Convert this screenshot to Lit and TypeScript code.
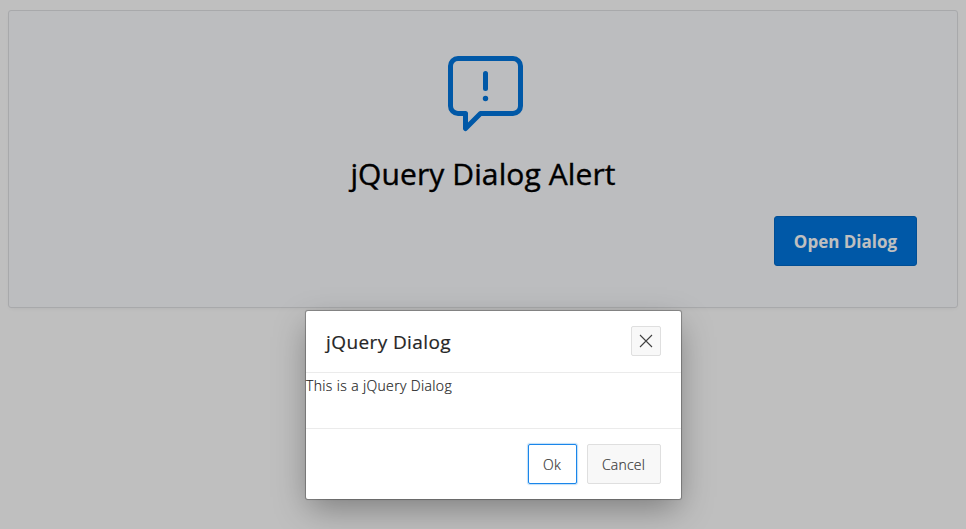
import { LitElement, html, css, svg } from 'lit'
import { customElement, property } from 'lit/decorators.js'

const closeIcon = svg`<path d="M1 1 13 13M13 1 1 13" fill="none" stroke="#404040" stroke-width="1.1" />`

@customElement('alert-region')
export class AlertRegion extends LitElement {
  @property({ type: String }) heading = ''

  static styles = css`
    :host {
      display: flex;
      flex-direction: column;
      align-items: center;
      box-sizing: border-box;
      height: 298px;
      padding: 45px 40px 0;
      background: #fbfcff;
      border: 1px solid #e1e2e5;
      border-radius: 3px;
      box-shadow: 0 2px 4px -2px rgba(0, 0, 0, 0.08);
    }
    .icon {
      display: block;
      width: 76px;
      height: 76px;
      margin-left: 4px;
    }
    .heading {
      margin: 18px 0 0;
      font-size: 30px;
      font-weight: 500;
      line-height: 48px;
      letter-spacing: 0.1px;
      -webkit-text-stroke: 0.4px #000;
      white-space: nowrap;
      color: #000;
    }
    .open {
      align-self: flex-end;
      box-sizing: border-box;
      width: 143px;
      height: 50px;
      margin-top: 18px;
      padding: 0;
      background: #0076df;
      border: 1px solid #0069c7;
      border-radius: 3px;
      font: inherit;
      font-size: 17px;
      font-weight: 700;
      letter-spacing: 0;
      color: #fff;
      white-space: nowrap;
      cursor: pointer;
    }
  `

  render() {
    return html`
      <svg class="icon" viewBox="-0.5 0 76 76">
        <path
          d="M10.5 2.5h55a7.5 7.5 0 0 1 7.5 7.5v40a7.5 7.5 0 0 1-7.5 7.5H33L18 72.5v-15h-7.5A7.5 7.5 0 0 1 3 50V10a7.5 7.5 0 0 1 7.5-7.5z"
          fill="none" stroke="#0076df" stroke-width="5" stroke-linejoin="round" />
        <path d="M38 17.5v15" stroke="#0076df" stroke-width="5" stroke-linecap="round" />
        <circle cx="38" cy="42.5" r="2.7" fill="#0076df" />
      </svg>
      <h1 class="heading">${this.heading}</h1>
      <button class="open">Open Dialog</button>
    `
  }
}

@customElement('alert-dialog')
export class AlertDialog extends LitElement {
  @property({ type: String }) heading = ''
  @property({ type: String }) message = ''

  static styles = css`
    :host {
      display: flex;
      flex-direction: column;
      box-sizing: border-box;
      width: 377px;
      height: 190px;
      background: #fff;
      border: 1px solid rgba(0, 0, 0, 0.15);
      background-clip: padding-box;
      border-radius: 3px;
      box-shadow: 0 12px 32px -4px rgba(0, 0, 0, 0.35), 0 0 1px rgba(0, 0, 0, 0.15);
      color: #262626;
    }
    .titlebar {
      display: flex;
      align-items: flex-start;
      justify-content: space-between;
      box-sizing: border-box;
      height: 62px;
      padding: 15px 20px 0;
      border-bottom: 1px solid #ebebeb;
    }
    .title {
      font-size: 19px;
      font-weight: 500;
      line-height: 32px;
      letter-spacing: 0.4px;
      -webkit-text-stroke: 0.2px #262626;
      white-space: nowrap;
    }
    .close {
      display: flex;
      align-items: center;
      justify-content: center;
      box-sizing: border-box;
      width: 30px;
      height: 30px;
      padding: 0 1px 0 0;
      background: #f8f8f8;
      border: 1px solid #dfdfdf;
      border-radius: 2px;
    }
    .close svg {
      width: 14px;
      height: 14px;
    }
    .content {
      flex: 1;
      padding-top: 3px;
      font-size: 14px;
      font-weight: 300;
      line-height: 20px;
      letter-spacing: 0.36px;
      -webkit-text-stroke: 0.2px #262626;
      white-space: nowrap;
    }
    .buttons {
      display: flex;
      justify-content: flex-end;
      gap: 10px;
      box-sizing: border-box;
      height: 71px;
      padding: 15px 20px;
      border-top: 1px solid #ebebeb;
    }
    .button {
      box-sizing: border-box;
      width: 74px;
      height: 40px;
      padding: 0 1px 0 0;
      background: #f8f8f8;
      border: 1px solid #dfdfdf;
      border-radius: 2px;
      font: inherit;
      font-size: 14px;
      font-weight: 300;
      letter-spacing: 0.2px;
      -webkit-text-stroke: 0.2px #383838;
      color: #383838;
    }
    .button.focused {
      width: 49px;
      background: #fff;
      border-color: #1a86ea;
      box-shadow: 0 0 1px 1px rgba(0, 118, 223, 0.25);
    }
  `

  render() {
    return html`
      <div class="titlebar">
        <span class="title">${this.heading}</span>
        <button class="close" aria-label="Close">
          <svg viewBox="0 0 14 14">${closeIcon}</svg>
        </button>
      </div>
      <div class="content">${this.message}</div>
      <div class="buttons">
        <button class="button focused">Ok</button>
        <button class="button">Cancel</button>
      </div>
    `
  }
}

@customElement('app-root')
export class AppRoot extends LitElement {
  static styles = css`
    :host {
      display: block;
      box-sizing: border-box;
      height: 529px;
      padding: 10px 8px;
      overflow: hidden;
      background: #fff;
      font-family: 'Segoe UI', 'Open Sans', 'Noto Sans', sans-serif;
    }
    .overlay {
      position: absolute;
      top: 0;
      left: 0;
      width: 100%;
      height: 529px;
      background: rgba(0, 0, 0, 0.25);
    }
    .dialog {
      position: absolute;
      top: 310px;
      left: 305px;
    }
  `

  render() {
    return html`
      <alert-region heading="jQuery Dialog Alert"></alert-region>
      <div class="overlay"></div>
      <alert-dialog class="dialog" heading="jQuery Dialog" message="This is a jQuery Dialog"></alert-dialog>
    `
  }
}
